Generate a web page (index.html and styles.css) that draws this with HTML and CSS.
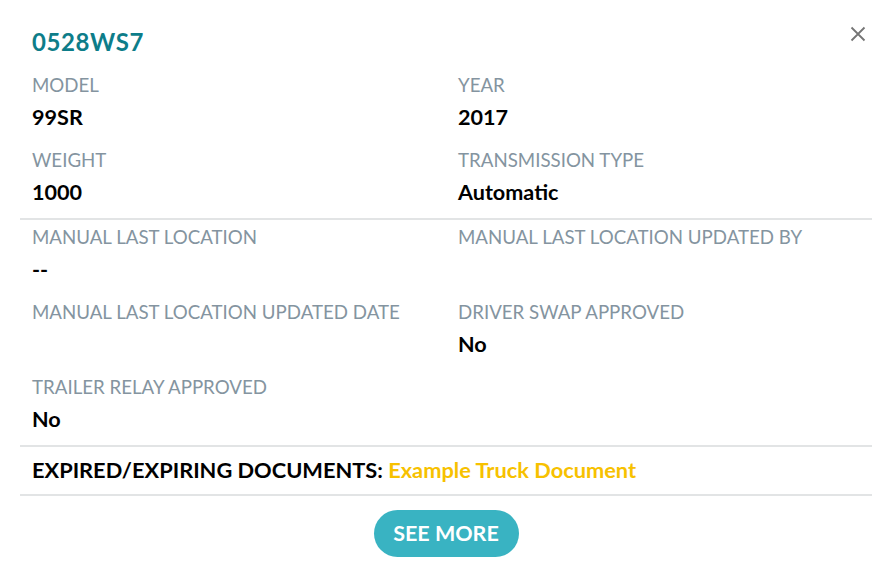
FILE: index.html
```html
<!DOCTYPE html>
<html lang="en">
<head>
  <meta charset="UTF-8">
  <title>Truck 0528WS7</title>
  <link rel="stylesheet" href="styles.css">
</head>
<body>
  <div class="card">
    <div class="card-header">
      <h2 class="truck-id">0528WS7</h2>
      <button class="close-btn" aria-label="Close">
        <svg width="16" height="16" viewBox="0 0 16 16">
          <path d="M1.5 1.5 L14.5 14.5 M14.5 1.5 L1.5 14.5" stroke="#757575" stroke-width="1.8" fill="none"/>
        </svg>
      </button>
    </div>

    <div class="field-grid first">
      <div class="field">
        <p class="field-label">Model</p>
        <p class="field-value">99SR</p>
      </div>
      <div class="field">
        <p class="field-label">Year</p>
        <p class="field-value">2017</p>
      </div>
      <div class="field">
        <p class="field-label">Weight</p>
        <p class="field-value">1000</p>
      </div>
      <div class="field">
        <p class="field-label">Transmission Type</p>
        <p class="field-value">Automatic</p>
      </div>
    </div>

    <div class="field-grid second">
      <div class="field">
        <p class="field-label">Manual Last Location</p>
        <p class="field-value">--</p>
      </div>
      <div class="field">
        <p class="field-label">Manual Last Location Updated By</p>
        <p class="field-value"></p>
      </div>
      <div class="field">
        <p class="field-label">Manual Last Location Updated Date</p>
        <p class="field-value"></p>
      </div>
      <div class="field">
        <p class="field-label">Driver Swap Approved</p>
        <p class="field-value">No</p>
      </div>
      <div class="field">
        <p class="field-label">Trailer Relay Approved</p>
        <p class="field-value">No</p>
      </div>
    </div>

    <div class="documents">
      EXPIRED/EXPIRING DOCUMENTS: <span class="doc-link">Example Truck Document</span>
    </div>

    <div class="actions">
      <button class="btn-more">SEE MORE</button>
    </div>
  </div>
</body>
</html>
```

FILE: styles.css
```css
* {
  box-sizing: border-box;
  margin: 0;
  padding: 0;
  font-family: Lato, "Open Sans", Arial, sans-serif;
}

body {
  background-color: #ffffff;
}

.card {
  margin: 0 22px 0 20px;
  padding-top: 28px;
}

.card-header {
  display: flex;
  justify-content: space-between;
  align-items: flex-start;
  padding-left: 12px;
}

.truck-id {
  font-size: 24px;
  line-height: 28.8px;
  font-weight: bold;
  letter-spacing: 0.6px;
  color: #0d7d89;
}

.close-btn {
  background: none;
  border: none;
  cursor: pointer;
  margin-top: -2px;
  margin-right: 6px;
  width: 16px;
  height: 16px;
}

.field-grid {
  display: grid;
  grid-template-columns: 1fr 1fr;
  row-gap: 19px;
}

.field-grid.first {
  padding-top: 17px;
  padding-bottom: 13px;
}

.field-grid.second {
  border-top: 2px solid #e2e4e5;
  padding-top: 6px;
  padding-bottom: 13px;
}

.field {
  padding-left: 12px;
}

.field-label {
  font-size: 18.7px;
  line-height: 22px;
  color: #8494a0;
  text-transform: uppercase;
  margin-bottom: 8px;
}

.field-value {
  font-size: 21.6px;
  line-height: 26px;
  min-height: 26px;
  font-weight: bold;
  color: #000000;
}

.documents {
  border-top: 2px solid #e2e4e5;
  border-bottom: 2px solid #e2e4e5;
  padding: 10px 12px 11px;
  font-size: 21.8px;
  line-height: 26px;
  font-weight: bold;
  color: #000000;
}

.doc-link {
  color: #f7c100;
}

.actions {
  display: flex;
  justify-content: center;
  padding-top: 14px;
}

.btn-more {
  width: 145px;
  height: 47px;
  border: none;
  border-radius: 24px;
  background-color: #39b3c2;
  color: #ffffff;
  font-size: 21.5px;
  font-weight: bold;
  cursor: pointer;
}
```
